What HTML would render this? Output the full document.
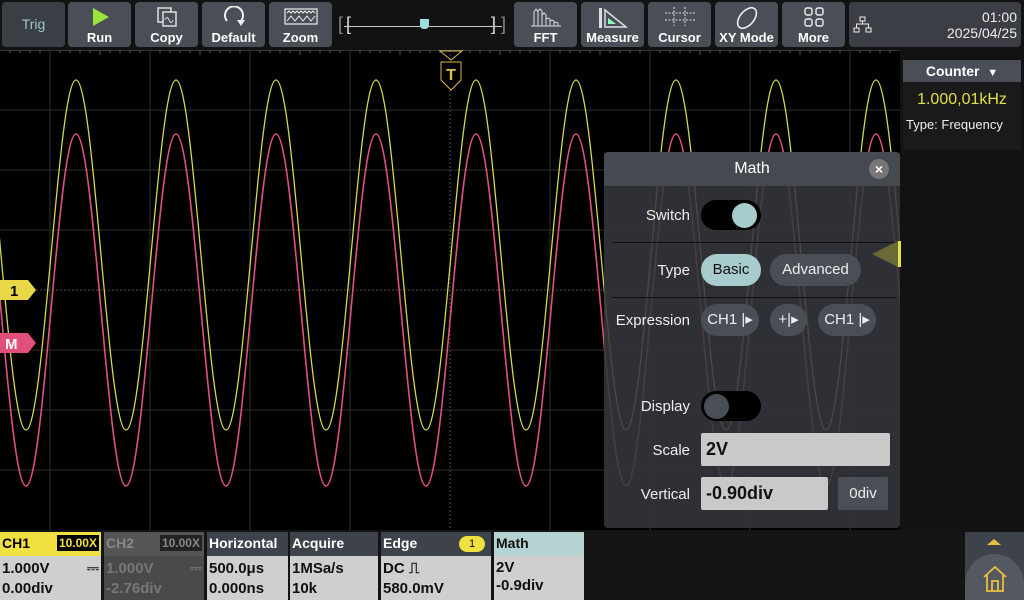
<!DOCTYPE html>
<html><head><meta charset="utf-8"><style>
*{box-sizing:border-box;margin:0;padding:0}
body{width:1024px;height:600px;background:#121212;font-family:"Liberation Sans",sans-serif;position:relative;overflow:hidden;color:#fff}
.btn{position:absolute;top:2px;height:45px;width:63px;background:#4a4e56;border-radius:4px;text-align:center;font-size:13px;font-weight:bold}
.btn span{position:absolute;bottom:2px;left:0;right:0}
.btn svg{position:absolute;top:4px;left:50%;transform:translateX(-50%)}
.ab{position:absolute}
.hd{position:absolute;left:0;right:0;top:0;height:24px;font-size:14px;font-weight:bold;padding:3px 2px}
.bd{position:absolute;left:0;right:0;top:24px;bottom:0;background:#cfcfcf;color:#111;font-size:15px;font-weight:bold;padding:3px 2px;line-height:20px}
.lbl{position:absolute;right:210px;font-size:15px;color:#eee;text-align:right}
.pill{position:absolute;height:32px;border-radius:16px;background:#4a4e56;color:#eee;font-size:15px;text-align:center;line-height:32px}
</style></head><body>
<div class="btn" style="left:2px;background:#3a3e45;color:#9ec7c7;font-weight:normal;font-size:14px;line-height:45px">Trig</div>
<div class="btn" style="left:68px"><svg width="20" height="22"><polygon points="3,2 19,11 3,20" fill="#9be33a"/></svg><span>Run</span></div>
<div class="btn" style="left:135px"><svg width="24" height="22"><rect x="3" y="2" width="13" height="14" fill="none" stroke="#ddd" stroke-width="1.5"/><rect x="8" y="6" width="13" height="14" fill="#4a4e56" stroke="#ddd" stroke-width="1.5"/><path d="M10,14 q2,-5 4,0 t4,0" stroke="#ddd" fill="none"/></svg><span>Copy</span></div>
<div class="btn" style="left:202px"><svg width="26" height="22"><path d="M20,15 A9,9 0 1 0 6,15" stroke="#eee" stroke-width="2" fill="none"/><polygon points="16,14 24,14 20,20" fill="#eee"/></svg><span>Default</span></div>
<div class="btn" style="left:269px"><svg width="34" height="20"><rect x="1" y="3" width="32" height="15" fill="none" stroke="#eee" stroke-width="1.2"/><path d="M3,7 l2,-2 2,2 2,-2 2,2 2,-2 2,2 2,-2 2,2 2,-2 2,2 2,-2 2,2 2,-2 2,2M3,15 l4,-5 4,5 4,-5 4,5 4,-5 4,5 4,-5" stroke="#eee" fill="none" stroke-width="1"/></svg><span>Zoom</span></div>
<div class="ab" style="left:338px;top:14px;width:172px;height:24px;color:#888;font-size:18px">
<span class="ab" style="left:0;top:0">[</span><span class="ab" style="left:8px;top:0;color:#ddd">[</span><span class="ab" style="left:153px;top:0;color:#ddd">]</span><span class="ab" style="left:163px;top:0">]</span>
<div class="ab" style="left:6px;top:12px;width:158px;height:1px;background:#ccc"></div>
<div class="ab" style="left:82px;top:5px;width:9px;height:10px;background:#9fdede;border-radius:0 0 4px 4px"></div></div>
<div class="btn" style="left:514px"><svg width="34" height="22"><path d="M2,20 h30 M5,20 V6 l2,-3 2,3 V20 M9,20 V5 l2,-2 2,2 V20 M13,20 V9 l2,-2 2,2 V20 M17,20 V13 l2,-1 2,1 V20 M21,20 V15 l2,-1 2,1 V20 M25,20 v-3 l2,-1 2,1 v3" stroke="#ddd" fill="none" stroke-width="1"/></svg><span>FFT</span></div>
<div class="btn" style="left:581px"><svg width="34" height="24"><rect x="3" y="2" width="3" height="20" fill="#ddd"/><path d="M9,4 V21 H30 Z" stroke="#ddd" stroke-width="1.5" fill="none"/><path d="M12,12 V18 H20 Z" fill="#8fb"/></svg><span>Measure</span></div>
<div class="btn" style="left:648px"><svg width="34" height="20"><path d="M2,7 h30 M2,14 h30 M11,1 v19 M22,1 v19" stroke="#ddd" stroke-dasharray="2,1.5" fill="none"/></svg><span>Cursor</span></div>
<div class="btn" style="left:715px"><svg width="30" height="24"><ellipse cx="15" cy="12" rx="7" ry="12" transform="rotate(40 15 12)" stroke="#eee" stroke-width="1.6" fill="none"/></svg><span>XY Mode</span></div>
<div class="btn" style="left:782px"><svg width="22" height="22"><rect x="2" y="2" width="7" height="7" rx="2" stroke="#eee" fill="none" stroke-width="1.4"/><rect x="13" y="2" width="7" height="7" rx="2" stroke="#eee" fill="none" stroke-width="1.4"/><rect x="2" y="13" width="7" height="7" rx="2" stroke="#eee" fill="none" stroke-width="1.4"/><rect x="13" y="13" width="7" height="7" rx="2" stroke="#eee" fill="none" stroke-width="1.4"/></svg><span>More</span></div>
<div class="ab" style="left:849px;top:2px;width:172px;height:45px;background:#3b3e45;border-radius:4px">
<svg class="ab" style="left:4px;top:14px" width="20" height="18"><rect x="7" y="1" width="5" height="4" stroke="#eee" fill="none"/><rect x="1" y="12" width="5" height="4" stroke="#eee" fill="none"/><rect x="13" y="12" width="5" height="4" stroke="#eee" fill="none"/><path d="M9.5,5 v3 M3.5,12 v-4 h12 v4" stroke="#eee" fill="none"/></svg>
<div class="ab" style="right:4px;top:7px;text-align:right;font-size:14px;line-height:16px;color:#eee">01:00<br>2025/04/25</div></div>
<svg class="ab" style="left:0;top:50px" width="900" height="480">
<rect width="900" height="480" fill="#000"/>
<g stroke="#2e2e2e" stroke-width="1">
<path d="M50,0v480M150,0v480M250,0v480M350,0v480M550,0v480M650,0v480M750,0v480M850,0v480M0,60h900M0,120h900M0,180h900M0,300h900M0,360h900M0,420h900"/>
</g>
<path d="M450,0v480M0,240h900" stroke="#4a4a4a" stroke-dasharray="2,2"/>
<path d="M0,0h900" stroke="#666"/>
<g stroke="#555"><path d="M10,0v3M20,0v3M30,0v3M40,0v3M60,0v3M70,0v3M80,0v3M90,0v3M100,0v5M110,0v3M120,0v3M130,0v3M140,0v3M160,0v3M170,0v3M180,0v3M190,0v3M200,0v5M210,0v3M220,0v3M230,0v3M240,0v3M260,0v3M270,0v3M280,0v3M290,0v3M300,0v5M310,0v3M320,0v3M330,0v3M340,0v3M360,0v3M370,0v3M380,0v3M390,0v3M400,0v5M410,0v3M420,0v3M430,0v3M440,0v3M460,0v3M470,0v3M480,0v3M490,0v3M500,0v5M510,0v3M520,0v3M530,0v3M540,0v3M560,0v3M570,0v3M580,0v3M590,0v3M600,0v5M610,0v3M620,0v3M630,0v3M640,0v3M660,0v3M670,0v3M680,0v3M690,0v3M700,0v5M710,0v3M720,0v3M730,0v3M740,0v3M760,0v3M770,0v3M780,0v3M790,0v3M800,0v5M810,0v3M820,0v3M830,0v3M840,0v3M860,0v3M870,0v3M880,0v3M890,0v3"/></g>
<path d="M-24,30 c18.2,0 31.8,350 50,350 s31.8,-350 50,-350 s31.8,350 50,350 s31.8,-350 50,-350 s31.8,350 50,350 s31.8,-350 50,-350 s31.8,350 50,350 s31.8,-350 50,-350 s31.8,350 50,350 s31.8,-350 50,-350 s31.8,350 50,350 s31.8,-350 50,-350 s31.8,350 50,350 s31.8,-350 50,-350 s31.8,350 50,350 s31.8,-350 50,-350 s31.8,350 50,350 s31.8,-350 50,-350 s31.8,350 50,350 s31.8,-350 50,-350" stroke="#d8d84a" stroke-width="1.3" fill="none"/>
<path d="M-24,84 c18.2,0 31.8,352 50,352 s31.8,-352 50,-352 s31.8,352 50,352 s31.8,-352 50,-352 s31.8,352 50,352 s31.8,-352 50,-352 s31.8,352 50,352 s31.8,-352 50,-352 s31.8,352 50,352 s31.8,-352 50,-352 s31.8,352 50,352 s31.8,-352 50,-352 s31.8,352 50,352 s31.8,-352 50,-352 s31.8,352 50,352 s31.8,-352 50,-352 s31.8,352 50,352 s31.8,-352 50,-352 s31.8,352 50,352 s31.8,-352 50,-352" stroke="#e0507a" stroke-width="1.6" fill="none"/>
<polygon points="440,1 462,1 451,10" fill="none" stroke="#d8b840"/>
<path d="M441,12 h20 v18 l-10,10 l-10,-10z" fill="#000" stroke="#d8b840"/>
<text x="451" y="30" fill="#e0c040" font-size="16" font-weight="bold" text-anchor="middle" font-family="Liberation Sans">T</text>
<path d="M0,230 h28 l8,10 l-8,10 h-28z" fill="#e8d848"/>
<text x="10" y="246" fill="#000" font-size="15" font-weight="bold" font-family="Liberation Sans">1</text>
<path d="M0,283 h28 l8,10 l-8,10 h-28z" fill="#e0507a"/>
<text x="5" y="299" fill="#fff" font-size="15" font-weight="bold" font-family="Liberation Sans">M</text>
</svg>
<div class="ab" style="left:604px;top:152px;width:296px;height:376px;background:rgba(52,55,60,0.88);border-radius:4px">
<div class="ab" style="left:0;top:0;width:296px;height:34px;background:#454950;border-radius:4px 4px 0 0;text-align:center;line-height:34px;font-size:16px">Math</div>
<div class="ab" style="left:265px;top:7px;width:20px;height:20px;border-radius:10px;background:#777;text-align:center;line-height:20px;font-size:14px;font-weight:bold">×</div>
<div class="lbl" style="top:55px">Switch</div>
<div class="ab" style="left:97px;top:48px;width:60px;height:30px;border-radius:15px;background:#000"><div class="ab" style="left:31px;top:3px;width:25px;height:25px;border-radius:13px;background:#a8ccce"></div></div>
<div class="ab" style="left:8px;top:90px;width:284px;height:1px;background:#111"></div>
<div class="lbl" style="top:110px">Type</div>
<div class="pill" style="left:97px;top:102px;width:60px;background:#a8ccce;color:#111">Basic</div>
<div class="pill" style="left:166px;top:102px;width:91px">Advanced</div>
<div class="ab" style="left:8px;top:145px;width:284px;height:1px;background:#111"></div>
<div class="lbl" style="top:160px">Expression</div>
<div class="pill" style="left:97px;top:152px;width:58px">CH1 |▸</div>
<div class="pill" style="left:166px;top:152px;width:37px">+|▸</div>
<div class="pill" style="left:214px;top:152px;width:58px">CH1 |▸</div>
<div class="lbl" style="top:246px">Display</div>
<div class="ab" style="left:97px;top:239px;width:60px;height:30px;border-radius:15px;background:#000"><div class="ab" style="left:3px;top:3px;width:25px;height:25px;border-radius:13px;background:#4a4e56"></div></div>
<div class="lbl" style="top:290px">Scale</div>
<div class="ab" style="left:97px;top:281px;width:189px;height:33px;background:#c9c9c9;border-radius:2px;color:#111;font-weight:bold;font-size:18px;padding:6px 5px">2V</div>
<div class="lbl" style="top:334px">Vertical</div>
<div class="ab" style="left:97px;top:325px;width:127px;height:33px;background:#c9c9c9;border-radius:2px;color:#111;font-weight:bold;font-size:18px;padding:6px 5px">-0.90div</div>
<div class="ab" style="left:234px;top:325px;width:50px;height:33px;background:#4a4e56;border-radius:2px;text-align:center;line-height:33px;font-size:15px;color:#eee">0div</div>
</div>
<div class="ab" style="left:872px;top:241px;width:0;height:0;border-top:13px solid transparent;border-bottom:13px solid transparent;border-right:26px solid #6a6a36"></div>
<div class="ab" style="left:898px;top:241px;width:3px;height:26px;background:#e8e048"></div>
<div class="ab" style="left:903px;top:60px;width:118px;height:90px;background:#1a1a1a">
<div style="height:22px;background:#4a4e56;text-align:center;font-size:14px;font-weight:bold;line-height:22px">Counter &nbsp;<span style="font-size:11px">▼</span></div>
<div style="color:#e0e048;font-size:16px;text-align:center;margin-top:9px">1.000,01kHz</div>
<div style="font-size:13px;margin:8px 0 0 3px;color:#eee">Type: Frequency</div></div>
<div class="ab" style="left:0;top:530px;width:1024px;height:70px;background:#141414"></div>
<div class="ab" style="left:0;top:532px;width:101px;height:68px">
<div class="hd" style="background:#f0e040;color:#000">CH1<span class="ab" style="right:2px;top:3px;background:#000;color:#f0e040;font-size:12px;padding:1px 2px">10.00X</span></div>
<div class="bd">1.000V<span style="float:right">⎓</span><br>0.00div</div></div>
<div class="ab" style="left:104px;top:532px;width:100px;height:68px">
<div class="hd" style="background:#555;color:#888">CH2<span class="ab" style="right:2px;top:3px;background:#222;color:#888;font-size:12px;padding:1px 2px">10.00X</span></div>
<div class="bd" style="background:#4a4a4a;color:#777">1.000V<span style="float:right">⎓</span><br>-2.76div</div></div>
<div class="ab" style="left:207px;top:532px;width:81px;height:68px"><div class="hd" style="background:#3e424a">Horizontal</div><div class="bd">500.0μs<br>0.000ns</div></div>
<div class="ab" style="left:290px;top:532px;width:88px;height:68px"><div class="hd" style="background:#3e424a">Acquire</div><div class="bd">1MSa/s<br>10k</div></div>
<div class="ab" style="left:381px;top:532px;width:110px;height:68px"><div class="hd" style="background:#3e424a">Edge<span class="ab" style="right:6px;top:4px;width:26px;height:16px;border-radius:8px;background:#f0e040;color:#000;font-size:11px;text-align:center;line-height:16px;font-weight:normal">1</span></div><div class="bd">DC ⎍<br>580.0mV</div></div>
<div class="ab" style="left:494px;top:532px;width:90px;height:68px"><div class="hd" style="background:#b6d3d3;color:#111">Math</div><div class="bd" style="line-height:18px">2V<br>-0.9div</div></div>
<div class="ab" style="left:965px;top:532px;width:59px;height:68px;background:#3e424a">
<div class="ab" style="left:22px;top:7px;width:0;height:0;border-left:7px solid transparent;border-right:7px solid transparent;border-bottom:6px solid #e8c040"></div>
<div class="ab" style="left:0;top:22px;width:59px;height:46px;background:#545860;border-radius:30px 30px 0 0"></div>
<svg class="ab" style="left:17px;top:33px" width="26" height="28"><path d="M2,12 L13,2 L24,12 M5,10 V26 H21 V10 M10,26 V16 H16 V26" stroke="#e8c040" stroke-width="1.8" fill="none"/></svg></div>
</body></html>
